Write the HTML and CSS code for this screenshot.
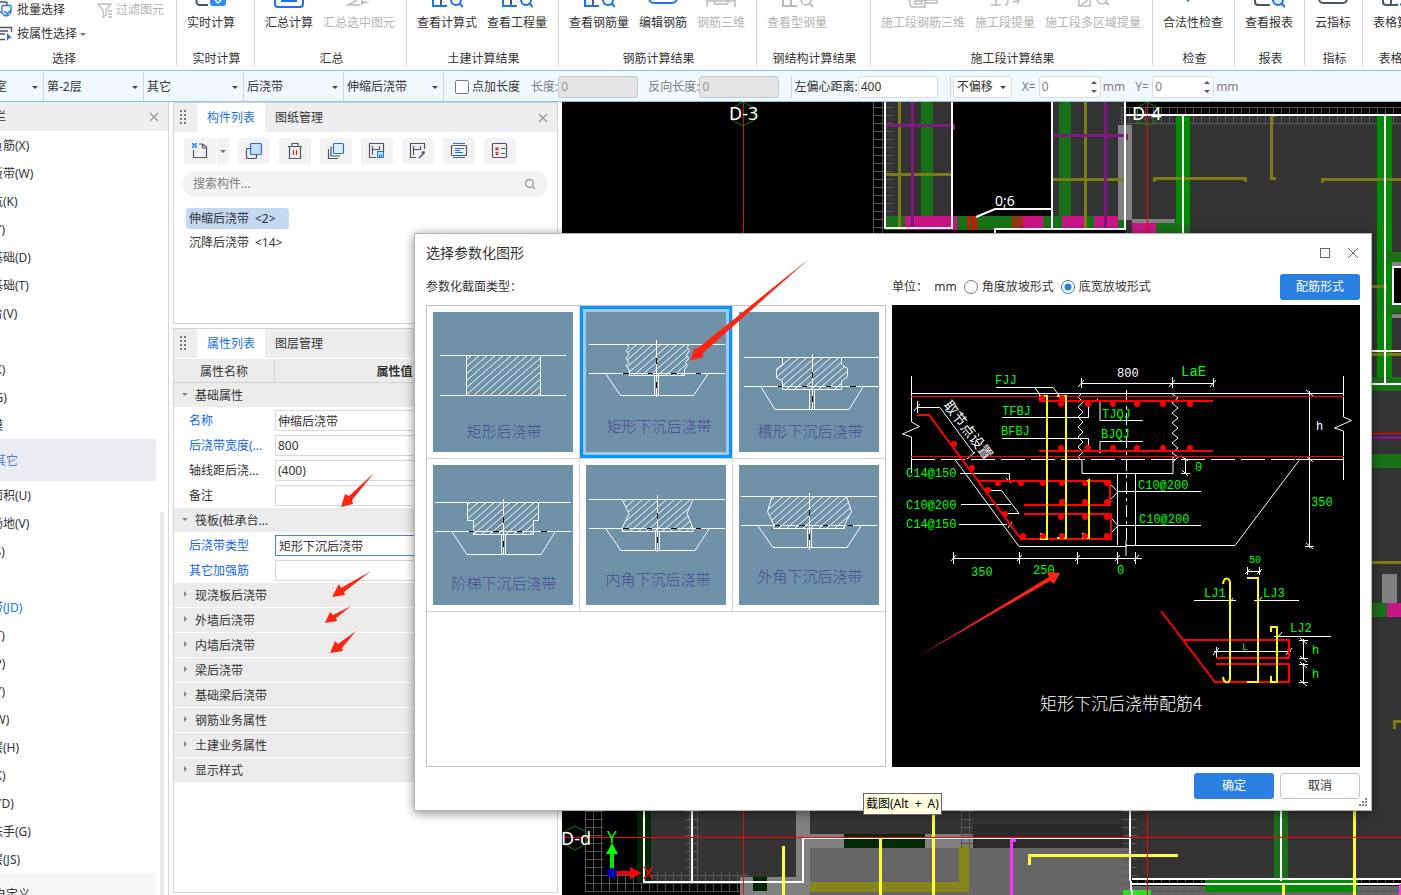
FILE: index.html
```html
<!DOCTYPE html>
<html lang="zh-CN">
<head>
<meta charset="utf-8">
<title>选择参数化图形</title>
<link rel="stylesheet" href="styles.css">
</head>
<body>
<div class="app">
  <header class="ribbon">
    <section class="group group-select">
      <div class="select-tools">
        <button class="tool"><svg width="16" height="18" viewBox="0 0 16 18"><path d="M0 4.500V2a1 1 0 0 1 1-1h7a1 1 0 0 1 1 1v2M0 11h3" fill="none" stroke="#4b5468" stroke-width="1.500"/><path d="M4 13V5.500a1 1 0 0 1 1-1h7a1 1 0 0 1 1 1V10a6 6 0 0 1-4.500 5A6 6 0 0 1 4 12M6 10l3 3 4-4" fill="none" stroke="#1a73e8" stroke-width="1.300"/></svg>批量选择</button>
        <button class="tool off"><svg width="16" height="16" viewBox="0 0 16 16"><path d="M1 2h13l-5 6v5l-3 2V8zM11 9h4M11 12h4M11 15h4" fill="none" stroke="#bbb" stroke-width="1.300"/></svg>过滤图元</button>
        <button class="tool wide"><svg width="16" height="16" viewBox="0 0 16 16"><path d="M0 1.500h13.500V6M2 5h8M2 8h5M0 13.500h7" fill="none" stroke="#4b5468" stroke-width="1.300"/><path d="M9 7l5 5-3 .3L9 15z" fill="#1a73e8"/></svg>按属性选择<i class="caret"></i></button>
      </div>
      <h2>选择</h2>
    </section>
    <section class="group group-live">
      <div class="tools"><button class="big"><svg width="32" height="12" viewBox="0 0 32 12"><path d="M1.500 0v2a3 3 0 0 0 3 3H13" fill="none" stroke="#4b5468" stroke-width="2"/><path d="M15 0h16v3a3 3 0 0 1-3 3H18a3 3 0 0 1-3-3z" fill="#2e8bff"/><path d="M20 0l3 3 4-4" stroke="#fff" fill="none" stroke-width="1.500"/></svg>实时计算</button></div>
      <h2>实时计算</h2>
    </section>
    <section class="group group-mid">
      <div class="tools"><button class="big"><svg width="32" height="12" viewBox="0 0 32 12"><path d="M2 0v4a3 3 0 0 0 3 3h22a3 3 0 0 0 3-3V0" fill="none" stroke="#1a73e8" stroke-width="2"/><path d="M8 1h16" stroke="#1a73e8" stroke-width="2"/></svg>汇总计算</button>
      <button class="big off"><svg width="32" height="12" viewBox="0 0 32 12"><path d="M14 0L5 5h12" fill="none" stroke="#bbb" stroke-width="1.500"/><path d="M18 0v6l3-3h6z" fill="#bbb"/></svg>汇总选中图元</button></div>
      <h2>汇总</h2>
    </section>
    <section class="group group-mid">
      <div class="tools"><button class="big"><svg width="32" height="12" viewBox="0 0 32 12"><path d="M2 0v6h14M10 0v5" fill="none" stroke="#1a73e8" stroke-width="2"/><path d="M10 0v4" stroke="#4b5468" stroke-width="2"/><circle cx="25" cy="0" r="5" fill="none" stroke="#1a73e8" stroke-width="2"/><path d="M28 3l4 4" stroke="#1a73e8" stroke-width="2"/></svg>查看计算式</button>
      <button class="big"><svg width="32" height="12" viewBox="0 0 32 12"><path d="M2 0v6h14M10 0v5" fill="none" stroke="#1a73e8" stroke-width="2"/><path d="M10 0v4" stroke="#4b5468" stroke-width="2"/><circle cx="25" cy="0" r="5" fill="none" stroke="#1a73e8" stroke-width="2"/><path d="M28 3l4 4" stroke="#1a73e8" stroke-width="2"/></svg>查看工程量</button></div>
      <h2>土建计算结果</h2>
    </section>
    <section class="group group-rebar">
      <div class="tools"><button class="big"><svg width="32" height="12" viewBox="0 0 32 12"><path d="M2 0v6h14M10 0v5" fill="none" stroke="#1a73e8" stroke-width="2"/><path d="M10 0v4" stroke="#4b5468" stroke-width="2"/><circle cx="25" cy="0" r="5" fill="none" stroke="#1a73e8" stroke-width="2"/><path d="M28 3l4 4" stroke="#1a73e8" stroke-width="2"/></svg>查看钢筋量</button>
      <button class="big"><svg width="32" height="12" viewBox="0 0 32 12"><path d="M2 -2a5 5 0 0 0 5 5h18a5 5 0 0 0 5-5" fill="none" stroke="#1a73e8" stroke-width="2"/></svg>编辑钢筋</button>
      <button class="big off"><svg width="32" height="12" viewBox="0 0 32 12"><path d="M2 0v7M9 0v4M23 0v4M30 0v7M2 1h28M9 4h14" fill="none" stroke="#bbb" stroke-width="1.500"/></svg>钢筋三维</button></div>
      <h2>钢筋计算结果</h2>
    </section>
    <section class="group group-steel">
      <div class="tools"><button class="big off"><svg width="32" height="12" viewBox="0 0 32 12"><path d="M2 0v6h14M10 0v5" fill="none" stroke="#bbb" stroke-width="2"/><circle cx="25" cy="0" r="5" fill="none" stroke="#bbb" stroke-width="1.500"/><path d="M28 3l4 4" stroke="#bbb" stroke-width="2"/></svg>查看型钢量</button></div>
      <h2>钢结构计算结果</h2>
    </section>
    <section class="group group-stage">
      <div class="tools"><button class="big off"><svg width="32" height="12" viewBox="0 0 32 12"><path d="M3 0v4a3 3 0 0 0 3 3h12V0M8 1h7v3H8zM14 0h16v3H18" fill="none" stroke="#bbb" stroke-width="1.500"/></svg>施工段钢筋三维</button>
      <button class="big off"><svg width="32" height="12" viewBox="0 0 32 12"><path d="M2 5h10M7 0v5M19 0c0 4-1 5-3 5M24 2l7-2M29 0v4" fill="none" stroke="#bbb" stroke-width="1.500"/></svg>施工段提量</button>
      <button class="big off"><svg width="32" height="12" viewBox="0 0 32 12"><path d="M2 0v6h11V0M4 5l7-5" fill="none" stroke="#bbb" stroke-width="1.500"/><circle cx="25" cy="-1" r="5" fill="none" stroke="#bbb" stroke-width="1.500"/><path d="M28 2l4 3" stroke="#bbb" stroke-width="2"/></svg>施工段多区域提量</button></div>
      <h2>施工段计算结果</h2>
    </section>
    <section class="group group-check">
      <div class="tools"><button class="big"><svg width="32" height="12" viewBox="0 0 32 12"><path d="M8 -3l3 4 3-4" fill="none" stroke="#1a73e8" stroke-width="1.500"/></svg>合法性检查</button></div>
      <h2>检查</h2>
    </section>
    <section class="group group-report">
      <div class="tools"><button class="big"><svg width="32" height="12" viewBox="0 0 32 12"><path d="M2 0v2a3 3 0 0 0 3 3h12" fill="none" stroke="#4b5468" stroke-width="2"/><circle cx="25" cy="0" r="5" fill="#d9eaff" stroke="#1a73e8" stroke-width="2"/><path d="M28 3l4 4" stroke="#1a73e8" stroke-width="2"/></svg>查看报表</button></div>
      <h2>报表</h2>
    </section>
    <section class="group group-index">
      <div class="tools"><button class="big"><svg width="32" height="12" viewBox="0 0 32 12"><path d="M2 -1a4 4 0 0 0 4 4h20a4 4 0 0 0 4-4" fill="none" stroke="#4b5468" stroke-width="2"/></svg>云指标</button></div>
      <h2>指标</h2>
    </section>
    <section class="group group-sheet">
      <div class="tools"><button class="big"><svg width="32" height="12" viewBox="0 0 32 12"><path d="M2 0v2a3 3 0 0 0 3 3h12M10 0v5" fill="none" stroke="#4b5468" stroke-width="2"/><path d="M19 5l9-7" stroke="#1a73e8" stroke-width="2"/></svg>表格算量</button></div>
      <h2>表格算量</h2>
    </section>
  </header>

  <form class="options">
    <span class="pick pick-first"><select aria-label="分区"><option>地下室</option></select></span>
    <span class="pick"><select aria-label="楼层"><option>第-2层</option></select></span>
    <span class="pick"><select aria-label="类别"><option>其它</option></select></span>
    <span class="pick"><select aria-label="构件类型"><option>后浇带</option></select></span>
    <span class="pick"><select aria-label="构件"><option>伸缩后浇带</option></select></span>
    <label class="check"><input type="checkbox">点加长度</label>
    <label class="field dim">长度:<input type="text" value="0" disabled></label>
    <label class="field dim">反向长度:<input type="text" value="0" disabled></label>
    <label class="field ruled">左偏心距离:<input type="text" value="400"></label>
    <span class="ruled"><span class="mode"><select aria-label="偏移方式"><option>不偏移</option></select></span></span>
    <label class="field spin dim"><b>X=</b><span><input type="text" value="0"></span>mm</label>
    <label class="field spin dim"><b>Y=</b><span><input type="text" value="0"></span>mm</label>
  </form>

  <main class="work">
    <aside class="nav">
      <div class="bar"><span class="nav-title">导航栏</span><button class="close" aria-label="关闭"><svg width="10" height="10" viewBox="0 0 10 10"><path d="M1 1l8 8M9 1L1 9" stroke="#999" stroke-width="1.200"/></svg></button></div>
      <div class="nav-body">
        <nav class="list">
          <a href="#">筏板负筋(X)</a><a href="#">基础板带(W)</a><a href="#">集水坑(K)</a><a href="#">柱墩(Y)</a><a href="#">独立基础(D)</a><a href="#">条形基础(T)</a><a href="#">桩承台(V)</a><a href="#">桩(U)</a><a href="#">垫层(X)</a><a href="#">地沟(G)</a><a href="#">砖胎膜</a>
          <a href="#" class="head on">其它</a>
          <a href="#">建筑面积(U)</a><a href="#">平整场地(V)</a><a href="#">散水(S)</a><a href="#">台阶</a><a href="#" class="current">后浇带(JD)</a><a href="#">挑檐(T)</a><a href="#">雨篷(P)</a><a href="#">阳台(Y)</a><a href="#">屋面(W)</a><a href="#">保温层(H)</a><a href="#">栏板(K)</a><a href="#">压顶(YD)</a><a href="#">栏杆扶手(G)</a><a href="#">防水层(JS)</a>
          <a href="#" class="head">自定义</a>
        </nav>
        <div class="track"></div>
      </div>
    </aside>

    <div class="panels">
      <section class="panel components">
        <div class="bar"><i class="grip"></i><button class="tab on">构件列表</button><button class="tab">图纸管理</button><button class="close" aria-label="关闭"><svg width="10" height="10" viewBox="0 0 10 10"><path d="M1 1l8 8M9 1L1 9" stroke="#999" stroke-width="1.200"/></svg></button></div>
        <div class="icons">
          <span class="split"><button aria-label="新建"><svg width="18" height="18" viewBox="0 0 18 18"><path d="M2.500 8v7.500h13V5l-4-3H8M11.500 2v4h4" fill="none" stroke="#4b5468" stroke-width="1.200"/><path d="M1 1h5v5H1z" fill="#8dbcf5"/><path d="M1 1l5 5M6 1L1 6" stroke="#1a73e8"/></svg></button><button class="more" aria-label="更多新建"><i class="caret"></i></button></span>
          <button aria-label="复制"><svg width="18" height="18" viewBox="0 0 18 18"><path d="M5 6.500H2.500a1 1 0 0 0-1 1v8a1 1 0 0 0 1 1h8a1 1 0 0 0 1-1V13" fill="none" stroke="#4b5468" stroke-width="1.200"/><rect x="5.500" y="1.500" width="11" height="11" rx="1" fill="#c9dff9" stroke="#1a73e8" stroke-width="1.200"/></svg></button>
          <button aria-label="删除"><svg width="18" height="18" viewBox="0 0 18 18"><path d="M2 4.500h14M6 4V1.500h6V4M3.500 5v11.500h11V5" fill="none" stroke="#4b5468" stroke-width="1.200"/><path d="M7.500 8v5M10.500 8v5" stroke="#e02020" stroke-width="1.200"/></svg></button>
          <button aria-label="层间复制"><svg width="18" height="18" viewBox="0 0 18 18"><path d="M1.500 7v9.500H11M4 4.500V14h9" fill="none" stroke="#4b5468" stroke-width="1.200"/><rect x="6.500" y="1.500" width="10" height="10" rx="1" fill="#e2efff" stroke="#1a73e8" stroke-width="1.200"/></svg></button>
          <button aria-label="存档"><svg width="18" height="18" viewBox="0 0 18 18"><path d="M8 15.500H1.500v-14h14V9M4.500 4v9M4.500 7.500h7M11.500 4v4" fill="none" stroke="#4b5468" stroke-width="1.200"/><rect x="9.500" y="9.500" width="6" height="6" fill="#c9dff9" stroke="#1a73e8"/><path d="M11.500 15v-2h2v2" stroke="#1a73e8" fill="none"/></svg></button>
          <button aria-label="提取"><svg width="18" height="18" viewBox="0 0 18 18"><path d="M7 15.500H1.500v-14h14V7M4.500 4v9M4.500 7.500h7M11.500 4v4" fill="none" stroke="#4b5468" stroke-width="1.200"/><path d="M10 16l4-4" stroke="#4b5468" stroke-width="1.500"/><path d="M12 10l3-1 1 1-1 3z" fill="#4b5468"/></svg></button>
          <button aria-label="排序"><svg width="18" height="18" viewBox="0 0 18 18"><path d="M3 1.500h12M3 15.500h12" stroke="#1a73e8" stroke-width="1.200"/><rect x="1.500" y="3.500" width="15" height="10" rx="1" fill="none" stroke="#4b5468" stroke-width="1.200"/><path d="M5 6.500h9M5 8.500h5M5 10.500h8" stroke="#1a73e8"/></svg></button>
          <button aria-label="清理"><svg width="18" height="18" viewBox="0 0 18 18"><rect x="1.500" y="1.500" width="14" height="14" rx="1" fill="none" stroke="#4b5468" stroke-width="1.200"/><path d="M4.500 5.500l3 2.500M7.500 5.500l-3 2.500M4.500 10l3 2.500M7.500 10l-3 2.500" stroke="#e02020" stroke-width="1.200"/><path d="M10 6.500h4M10 11.500h4" stroke="#4b5468" stroke-width="1.200"/></svg></button>
        </div>
        <label class="search"><input type="text" placeholder="搜索构件..." aria-label="搜索构件"><svg width="12" height="12" viewBox="0 0 12 12"><circle cx="5.500" cy="5.500" r="4" fill="none" stroke="#999" stroke-width="1.300"/><path d="M8 8l3 3" stroke="#999" stroke-width="1.300"/></svg></label>
        <ul class="items"><li class="on">伸缩后浇带&ensp;&lt;2&gt;</li><li>沉降后浇带&ensp;&lt;14&gt;</li></ul>
      </section>
      <section class="panel props">
        <div class="bar"><i class="grip"></i><button class="tab on">属性列表</button><button class="tab">图层管理</button></div>
        <table>
          <colgroup><col class="c1"><col class="c2"><col></colgroup>
          <thead><tr><th>属性名称</th><th>属性值</th><th></th></tr></thead>
          <tbody>
            <tr class="sec open"><td colspan="3">基础属性</td></tr>
            <tr class="key"><td><label for="p1">名称</label></td><td colspan="2"><input id="p1" value="伸缩后浇带"></td></tr>
            <tr class="key"><td><label for="p2">后浇带宽度(...</label></td><td colspan="2"><input id="p2" value="800"></td></tr>
            <tr><td><label for="p3">轴线距后浇...</label></td><td colspan="2"><input id="p3" value="(400)"></td></tr>
            <tr><td><label for="p4">备注</label></td><td colspan="2"><input id="p4"></td></tr>
            <tr class="sec open"><td colspan="3">筏板(桩承台...</td></tr>
            <tr class="key"><td><label for="p5">后浇带类型</label></td><td colspan="2"><input id="p5" class="active" value="矩形下沉后浇带"></td></tr>
            <tr class="key"><td><label for="p6">其它加强筋</label></td><td colspan="2"><input id="p6"></td></tr>
            <tr class="sec"><td colspan="3">现浇板后浇带</td></tr>
            <tr class="sec"><td colspan="3">外墙后浇带</td></tr>
            <tr class="sec"><td colspan="3">内墙后浇带</td></tr>
            <tr class="sec"><td colspan="3">梁后浇带</td></tr>
            <tr class="sec"><td colspan="3">基础梁后浇带</td></tr>
            <tr class="sec"><td colspan="3">钢筋业务属性</td></tr>
            <tr class="sec"><td colspan="3">土建业务属性</td></tr>
            <tr class="sec"><td colspan="3">显示样式</td></tr>
          </tbody>
        </table>
      </section>
    </div>

    <div class="canvas">
      <svg viewBox="562 102 839 793" preserveAspectRatio="xMinYMin slice" shape-rendering="crispEdges">
        <defs>
          <pattern id="mesh" x="585" y="107" width="8" height="8" patternUnits="userSpaceOnUse"><path d="M0 .5h8M.5 0v8" stroke="#555" fill="none"/></pattern>
          <pattern id="rungs" x="873" y="107" width="20" height="8" patternUnits="userSpaceOnUse"><path d="M0 .5h20" stroke="#555"/></pattern>
        </defs>
        <rect x="562" y="102" width="839" height="793" fill="#000"/>
        <g fill="#333"><path d="M885 102h67v126h-67zM1052 102h73v126h-73zM1125 115h276v765h-276zM651 811h145v71H651zM810 811h150v24H810zM960 811h172v70H960z"/></g>
        <rect x="873" y="102" width="20" height="131" fill="url(#rungs)"/><path d="M873.500 102v131M882.500 102v131" stroke="#555"/>
        <rect x="1121" y="107" width="280" height="18" fill="url(#mesh)"/>
        <path fill="#008b00" d="M1176 116h14v117h-14zM1377 116h15v261h-15z"/>
        <path fill="#187018" d="M921 102h12v126h-12zM1059 102h12v114h-12zM885 216h240v14H885zM1156 223h34v10h-34zM1387 252h14v10h-14zM1387 305h14v8h-14zM1372 377h29v14h-29zM1372 454h29v14h-29zM1372 603h15v14h-15zM1274 811h14v70h-14z"/>
        <path fill="#c71585" d="M905 216h52v14h-52zM1022 216h21v14h-21zM1062 216h25v14h-25zM1094 216h24v14h-24zM1132 223h24v10h-24zM1387 603h14v14h-14z"/>
        <path fill="#808080" d="M1118 125h14v95h-14zM1132 219h43v4h-43zM1392 262h9v4h-9zM1392 314h9v4h-9zM1382 574h15v29h-15z"/>
        <path fill="#000" d="M1393 267h8v37h-8z"/>
        <path d="M899 102v126M885 174h68M1085 102v126M1052 179h72M1154 182v-4h91v4M1276 115h-5v63h5M1322 183v-4h79M1372 286h13v5M1372 354h29M1372 562h29M1394 729v-8h7" stroke="#7c7c14" stroke-width="3" fill="none"/>
        <path d="M912 102v126M885 129v-4h68v5M1105 102v126M1052 139v-4h74v5M1372 437h29" stroke="#7d187d" stroke-width="3" fill="none"/>
        <path d="M969 216v14M973 216v14M976 216v14M1014 216v14M1018 216v14M1022 216v14" stroke="#f00" stroke-width="2"/>
        <path d="M885 102v126M952 102v127M884 228h69M1052 102v127M1125 102v127M995 233v-4h131M1125 115h276M1183 116v117M1385 116v268M1372 351h29M1372 384h29M1401 267h-8v37h8" stroke="#fff" stroke-width="2" fill="none"/>
        <path d="M976 217l19-8h57" stroke="#fff" stroke-width="2" fill="none" shape-rendering="auto"/>
        <rect x="585" y="811" width="18" height="81" fill="url(#mesh)"/><rect x="603" y="872" width="147" height="20" fill="url(#mesh)"/>
        <path fill="#022802" d="M637 811h14v71h-14z"/>
        <path fill="#808080" d="M796 811h14v70h-14zM796 834h180v14H796zM740 877h70v18h-70z"/>
        <path fill="#666" d="M810 848h320v47H810zM1132 886h269v9h-269z"/>
        <path fill="#333" d="M810 811h150v23H810z"/>
        <path fill="#2a2a2a" d="M973 824h150v24H973z"/>
        <path fill="#022802" d="M844 834h81v14h-81zM753 877h14v14h-14z"/>
        <path fill="#86861a" d="M810 882h149v10H810zM959 846h10v46h-10z"/>
        <path fill="#000" d="M1132 880h269v5h-269z"/>
        <rect x="1132" y="880" width="269" height="12" fill="url(#mesh)"/><rect x="961" y="811" width="12" height="37" fill="url(#mesh)"/><rect x="1123" y="811" width="14" height="80" fill="url(#mesh)"/><rect x="685" y="811" width="14" height="71" fill="url(#mesh)"/>
        <path fill="#008b00" d="M1205 879h153v13h-153z"/><path fill="#2bdc2b" d="M1123 890h28v5h-28z"/>
        <path d="M644 811v71h159v-44h327v3M692 811v71M1130 811v65l2 19M1281 811v70M1132 879h269M1132 884h269" stroke="#fff" stroke-width="2" fill="none"/>
        <path d="M783 846v49M880 839v56M933 811v84M1029 865v-10h149M1354 811v84M1283 884v11" stroke="#ff3" stroke-width="3" fill="none"/>
        <path d="M1011 895v-55h5M1400 884v11" stroke="#f3f" stroke-width="3" fill="none"/>
        <g fill="#f00" shape-rendering="auto"><rect x="743" y="102" width="1" height="793"/><rect x="1147" y="102" width="1" height="793"/><rect x="562" y="837" width="839" height="1"/><rect x="1372" y="433" width="29" height="1"/></g>
        <g fill="none" stroke="#080" shape-rendering="auto"><path d="M743 102l11 6v12l-11 6-11-6v-12zM1147 102l11 6v12l-11 6-11-6v-12zM575 826l11 6v12l-11 6-11-6v-12z"/></g>
        <g class="axis-text"><text x="729" y="120">D-3</text><text x="1132" y="120">D-4</text><text x="561" y="845">D-d</text></g>
        <text class="note" x="995" y="206">0;6</text>
        <g shape-rendering="auto"><path d="M612 870v-18" stroke="#0e0" stroke-width="4"/><path d="M606 854l6-11 6 11z" fill="#0f0"/><path d="M616 873h16" stroke="#e00" stroke-width="4"/><path d="M630 867l12 6-12 6z" fill="#f00"/><circle cx="612" cy="873" r="5" fill="#0000b8"/></g>
        <text class="axis-y" x="607" y="843">Y</text><text class="axis-x" x="643" y="879">X</text>
      </svg>
    </div>
  </main>
</div>

<section class="dialog" role="dialog" aria-label="选择参数化图形">
  <div class="title"><h1>选择参数化图形</h1>
    <button aria-label="最大化"><svg width="12" height="12" viewBox="0 0 12 12"><rect x="1.500" y="1.500" width="9" height="9" fill="none" stroke="#666"/></svg></button>
    <button aria-label="关闭"><svg width="12" height="12" viewBox="0 0 12 12"><path d="M1 1l10 10M11 1L1 11" stroke="#666"/></svg></button>
  </div>
  <div class="cols">
    <div class="left">
      <div class="row">参数化截面类型：</div>
      <div class="shapes">
        <svg class="defs" width="0" height="0"><defs><pattern id="hatch" width="8" height="7" patternUnits="userSpaceOnUse"><path d="M-1 8L9-1M-9 8L1-1M7 8l10-9" stroke="#fff" fill="none"/></pattern></defs></svg>
        <button class="shape"><svg viewBox="0 0 140 140"><path class="ln" d="M7 43.500h126M7 83.500h126"/><path class="fl" d="M33.500 43.500h74v40h-74z"/><text x="71" y="125">矩形后浇带</text></svg></button>
        <button class="shape on"><svg viewBox="0 0 140 140"><path class="ln" d="M3 32.500h136M3 61.500h136M20 62l14.500 21.500h73L122 62M68.500 63v20M72.500 63v20M70.500 28v57"/><path class="fl" d="M41 32.500l2 3-3 3 3 4-3 4 3 4-3 3 3 4v6h55.500v-6l3-4-2-3 3-4-2-4 3-4-2-3 1-3z"/><path class="bk" d="M37 61.500h6M62 61.500h5M85 61.500h6M110 61.500h5M70.500 46v6M70.500 70v6"/><text x="73" y="120">矩形下沉后浇带</text></svg></button>
        <button class="shape"><svg viewBox="0 0 140 140"><path class="ln" d="M5 45.500h135M5 74.500h135M22 75l14 22.500h74L124 75M70.500 78v20M75.500 78v20M73.500 42v56"/><path class="fl" d="M43.500 45.500v7l-6 5v8l6 4v8h59v-8l6-5v-8l-6-4v-7z"/><path class="bk" d="M39 74.500h4M63 74.500h5M87 74.500h5M111 74.500h6M73.500 60v6M73.500 84v6"/><text x="71" y="125">槽形下沉后浇带</text></svg></button>
        <button class="shape"><svg viewBox="0 0 140 140"><path class="ln" d="M2 37.500h136M2 66.500h136M19 67l15 22.500h74L122 67M68.500 70v19M72.500 70v19M70.500 34v56"/><path class="fl" d="M34.500 37.500v18h6v14h60v-14h5v-18z"/><path class="bk" d="M36 66.500h5M60 66.500h6M84 66.500h5M108 66.500h6M70.500 52v6M70.500 76v6"/><text x="71" y="124">阶梯下沉后浇带</text></svg></button>
        <button class="shape"><svg viewBox="0 0 140 140"><path class="ln" d="M3 34.500h136M3 63.500h136M20 64l15 21.500h74L123 64M69.500 67v19M73.500 67v19M71.500 30v57"/><path class="fl" d="M36 34.500l7 14-7 15v3h71v-3l-6-15 6-14z"/><path class="bk" d="M37 63.500h6M61 63.500h5M85 63.500h6M110 63.500h5M71.500 48v6M71.500 72v6"/><text x="72" y="120">内角下沉后浇带</text></svg></button>
        <button class="shape"><svg viewBox="0 0 140 140"><path class="ln" d="M2 31.500h136M2 60.500h136M19 61l15 21.500h74L122 61M68.500 64v19M72.500 64v19M70.500 28v57"/><path class="fl" d="M33 31.500l-4.500 15 6 13v4h71v-4l7-13-5-15z"/><path class="bk" d="M36 60.500h5M60 60.500h6M84 60.500h5M108 60.500h6M70.500 45v6M70.500 69v6"/><text x="71" y="117">外角下沉后浇带</text></svg></button>
      </div>
    </div>
    <div class="right">
      <div class="row"><span>单位：&nbsp; mm</span><label><input type="radio" name="slope">角度放坡形式</label><label><input type="radio" name="slope" checked>底宽放坡形式</label><button class="primary push">配筋形式</button></div>
      <div class="preview">
        <svg viewBox="892 305 468 462" preserveAspectRatio="xMidYMid meet">
          <g fill="none" stroke="#fff" stroke-width="1">
            <path d="M911.500 376v46l8 4.500-17 7.500 9 3v36M1343.500 376v41l8 3.500-17 7.500 9 3v49"/>
            <path d="M911 393.500h433M1296 459.500h48"/>
            <path d="M911 459.500h385" stroke-dasharray="24 6"/>
            <path d="M1081 383.500h133M1081.500 378v10M1172.500 377v11M1213.500 378v9M1078 387l6-7M1169 387l6-7M1210 387l6-7"/>
            <path d="M1081 394l-3 3 5 5-5 5 5 5-5 5 5 5-5 5 5 5-5 5 5 5-5 5 5 5-5 5 4 4v12.500h91V457M1172 394l6 4-6 5 6 5-6 5 6 5-6 5 6 5-6 5 6 5-6 5 6 5-6 5 6 4-5 5"/>
            <path d="M996 387.500h57l7 9M1035 387.500l6 9M1002 417.500h86.500V404M1002 438.500h86.500V450M1143 420.500h-43V402l-3-3M1143 441.500h-43V453l-3-3"/>
            <path d="M1126.500 390v156" stroke-dasharray="12 4 3 4"/>
            <path d="M917.500 401v12M914 411l6-7M918 407.500h22l34 46M967 459l8-7M955 459.500l64 87h107v-1h109l64-85"/>
            <path d="M960 473.500h49.500v7M1006 478l5 5M961 504.500h50M991 490.500h10.500l17.500 23h-12M959 524.500h48M1008 528l4-6"/>
            <path d="M1117.500 473v72M1135.500 473v72M1126 540v16"/>
            <path d="M1111 485l7 6.500-7 7.500M1118 491.500h83M1111 518l7 7.500-7 7.500M1118 525.500h83"/>
            <path d="M953 558.500h189M953.500 552v12M1019.500 552v12M1077.500 552v12M1117.500 552v12M1135.500 552v12M951 561l5-6M1017 561l5-6M1075 561l5-6M1115 561l5-6M1134 561l5-6"/>
            <path d="M1185.500 458v16M1181 456l7 5M1181 473.500h9M1182 470l6 6M1309.500 391v157M1306 390l7 6M1306 456l7 6M1305 546.500h9M1306 543l7 6"/>
            <path d="M1247 571.500h14M1247.500 567v8M1259.500 567v8M1245 574l5-5M1257 574l5-5"/>
            <path d="M1194 600.500h42M1254 600.500h45M1229 604l4-6M1257 603l5-6M1274 636.500h57M1277 638l5-6"/>
            <path d="M1214 651.500h77M1216.500 647v10M1289.500 647v10M1213 655l6-7M1286 655l6-7M1303.500 639v20M1303.500 663v21M1299 640.500h9M1299 658.500h9M1299 664.500h9M1299 682.500h9M1300 638l7 6M1300 656l7 6M1300 662l7 6M1300 680l7 6"/>
          </g>
          <g fill="none" stroke="#f00">
            <path d="M911 396.500h433M911 456.500h433"/>
            <path stroke-width="2" d="M917 415h12l92 124h90v-25h-87M978 481h132v24h-86M1039 401h174M1039 451h174M1161 611l54 71h74v-18h-73M1183 640h106v18h-73"/>
          </g>
          <g fill="none" stroke="#ff0" stroke-width="2"><path d="M1040 400v-4h7v143h-6v-6M1057 396h9v142h-9M1083 484l6-4v58h-6v-5M1223 584c1-8 7-6 7-1v95c0 6-6 6-7-1M1247 578h11v104h-11M1271 632v-5h6v55h-6v-6"/></g>
          <path class="dots" d="M1042 398h0M1062 398h0M1061 404h0M1088 404h0M1113 404h0M1137 404h0M1163 404h0M1190 404h0M1061 448h0M1088 448h0M1113 448h0M1137 448h0M1163 448h0M1190 448h0M954 444h0M972 468h0M988 490h0M1005 514h0M1023 536h0M998 483h0M1021 483h0M1043 483h0M1062 483h0M1085 483h0M1107 483h0M1062 502h0M1085 502h0M1107 502h0M1061 517h0M1085 517h0M1107 517h0M1043 536h0M1062 536h0M1085 536h0M1107 536h0"/>
          <g class="cad">
            <text x="995" y="384">FJJ</text><text x="1002" y="415">TFBJ</text><text x="1001" y="435">BFBJ</text><text x="1102" y="418">TJQJ</text><text x="1101" y="438">BJQJ</text>
            <text x="906" y="477">C14@150</text><text x="906" y="509">C10@200</text><text x="906" y="528">C14@150</text><text x="1138" y="489">C10@200</text><text x="1139" y="523">C10@200</text>
            <text x="971" y="576">350</text><text x="1033" y="574">250</text><text x="1117" y="574">0</text><text x="1195" y="471">0</text><text x="1311" y="506">350</text>
            <text x="1204" y="597">LJ1</text><text x="1263" y="597">LJ3</text><text x="1290" y="632">LJ2</text><text x="1312" y="654">h</text><text x="1312" y="678">h</text>
            <text class="lg" x="1181" y="376">LaE</text><text class="sm" x="1249" y="563">50</text><text class="sm" x="1242" y="650">L</text>
            <text class="wh" x="1117" y="377">800</text><text class="wh" x="1316" y="430">h</text>
          </g>
          <text class="slant" transform="translate(951 408) rotate(52)" x="-7" y="5">取节点设置</text>
          <text class="caption" x="1040" y="710">矩形下沉后浇带配筋4</text>
        </svg>
      </div>
    </div>
  </div>
  <footer><button class="primary">确定</button><button class="plain">取消</button></footer>
  <svg class="size-grip" width="9" height="9" viewBox="0 0 9 9"><path d="M6 0h2v2H6zM3 3h2v2H3zM6 3h2v2H6zM0 6h2v2H0zM3 6h2v2H3zM6 6h2v2H6z" fill="#888"/></svg>
</section>

<div class="tip" role="tooltip">截图(Alt&ensp;+&ensp;A)</div>

<svg class="marks" aria-hidden="true">
  <path d="M810 258L698 348l-4 1-4 12 13-4 0-4z"/>
  <path d="M917 657l133-76 4 3 6-11-13-1 2 5z"/>
  <path d="M374 473l-25 23-4-2-4 13 12-3-1-4z"/>
  <path d="M371 571l-30 17-2-4-7 13 13-2-1-3z"/>
  <path d="M351 606l-18 9-3-3-5 11 12-2-1-3z"/>
  <path d="M356 631l-18 13-3-3-5 12 13-2-1-3z"/>
</svg>
</body>
</html>
```

FILE: styles.css
```css
* { box-sizing: border-box; }
html, body { height: 100%; margin: 0; }
body {
  position: relative;
  overflow: hidden;
  background: #fff;
  color: #333;
  font: 12px/16px "Noto Sans", "Noto Sans CJK SC", sans-serif;
}
button, input, select { font: inherit; color: inherit; margin: 0; }
button { padding: 0; border: 0; background: none; white-space: nowrap; }
h1, h2 { margin: 0; font-weight: 400; }
.app { display: flex; flex-direction: column; height: 100%; }
.caret { display: inline-block; border: 3px solid transparent; border-top-color: #777; border-bottom: 0; }

/* ribbon */
.ribbon { display: flex; flex: none; height: 70px; overflow: hidden; }
.group { position: relative; flex: none; display: flex; flex-direction: column; padding: 0 10px 3px; }
.group::after { content: ""; position: absolute; right: 0; top: 0; bottom: 4px; border-right: 1px solid #d4d4d4; }
.group h2 { margin: auto -1px 0 0; text-align: center; font-size: 12px; }
.group-select { width: 227px; margin-left: -50px; }
.group-live { width: 78px; }
.group-mid { width: 152px; }
.group-rebar { width: 198px; }
.group-steel { width: 114px; }
.group-stage { width: 282px; }
.group-check { width: 82px; }
.group-report { width: 70px; }
.group-index { width: 58px; }
.group-sheet { width: 78px; }
.tools { display: flex; gap: 10px; }
.big { display: flex; flex-direction: column; align-items: center; gap: 3px; }
.off { color: #b4b4b4; }
.select-tools { display: grid; grid-template-columns: 99px auto; row-gap: 8px; padding: 2px 0 0 38px; }
.tool { display: flex; align-items: center; gap: 3px; height: 16px; }
.wide { grid-column: 1 / 3; }

/* option bar */
.options {
  display: flex; flex: none; align-items: center; height: 32px; padding-top: 1px; overflow: hidden;
  background: #f0f9fe; border-top: 1px solid #8fc0f5; border-bottom: 1px solid #8fc0f5;
}
.options select { appearance: none; border: 0; background: none; width: 100%; height: 22px; padding: 0 0 0 3px; outline: 0; }
.pick, .mode { position: relative; flex: none; }
.pick { width: 100px; height: 30px; padding-top: 4px; border-right: 1px solid #d0d7dc; }
.pick-first { width: 76px; margin-left: -32px; }
.pick::after, .mode::after {
  content: ""; position: absolute; right: 5px; top: 14px;
  border: 3px solid transparent; border-top-color: #444; border-bottom: 0;
}
.mode { display: block; width: 59px; height: 22px; background: #fff; border: 1px solid #d5dbe0; border-radius: 3px; }
.mode select { height: 20px; }
.mode::after { top: 9px; }
.check { display: flex; align-items: center; gap: 3px; margin: 0 11px; }
.check input { appearance: none; width: 14px; height: 14px; border: 1px solid #777; border-radius: 2px; background: #fff; }
.field { display: flex; align-items: center; white-space: nowrap; }
.field input { width: 80px; height: 22px; padding: 0 2px; border: 1px solid #d5dbe0; border-radius: 3px; background: #fff; }
.field input:disabled { background: #e4e4e4; border-color: #c0c8d2; color: #999; }
.field b { min-width: 17px; font-weight: 400; }
.dim { color: #808080; margin-right: 10px; }
.ruled { margin-left: 2px; padding-left: 2px; border-left: 1px solid #d0d7dc; margin-right: 10px; }
.spin span { position: relative; margin-right: 2px; }
.spin input { width: 62px; }
.spin span::before, .spin span::after { content: ""; position: absolute; right: 4px; border: 3px solid transparent; }
.spin span::before { top: 5px; border-top: 0; border-bottom-color: #555; }
.spin span::after { bottom: 5px; border-bottom: 0; border-top-color: #555; }

/* work area */
.work { display: flex; flex: 1; min-height: 0; }
.bar { display: flex; flex: none; height: 29px; background: #eeeef0; }
.close { display: flex; align-items: center; margin-left: auto; padding: 0 9px; }
.nav { display: flex; flex-direction: column; flex: none; width: 169px; overflow: hidden; border-right: 1px solid #d4d4d4; }
.nav-title { margin-left: -30px; line-height: 30px; }
.nav-body { display: flex; flex: 1; min-height: 0; gap: 4px; }
.list { width: 156px; }
.list a { display: block; height: 28px; text-indent: -33px; line-height: 29px; color: inherit; text-decoration: none; white-space: nowrap; }
.list .head { height: 42px; line-height: 43px; text-indent: -6px; background: #f5f6f8; }
.list .on { background: #ebecf1; color: #4a7fd8; }
.list .current { color: #1a73e8; }
.track { width: 4px; margin-top: 381px; background: #e8e8e8; }
.panels { display: flex; flex-direction: column; flex: none; width: 385px; margin: 0 4px; gap: 4px; padding-bottom: 2px; }
.panel { border: 1px solid #d4d4d4; overflow: hidden; }
.components { flex: none; height: 222px; }
.props { flex: 1; min-height: 0; }
.grip { width: 7px; height: 14px; margin: 7px 10px 0 6px; background: conic-gradient(#777 25%, transparent 0) 2px 0 / 4px 4px; }
.tab { width: 68px; }
.tab.on { background: #fff; color: #1a73e8; }
.icons { display: flex; gap: 9px; padding: 6px 10px; }
.icons button { display: flex; align-items: center; justify-content: center; width: 32px; height: 26px; border-radius: 3px; background: #f3f3f3; }
.split { display: flex; gap: 1px; }
.icons .more { width: 12px; }
.search { display: flex; align-items: center; height: 26px; margin: 1px 9px 11px 8px; padding: 0 12px 0 11px; border-radius: 13px; background: #f3f3f3; }
.search input { flex: 1; min-width: 0; border: 0; padding: 0; background: none; outline: 0; }
.search input::placeholder { color: #808080; opacity: 1; }
.items { margin: 0 0 0 12px; padding: 0; list-style: none; }
.items li { width: 103px; height: 21px; margin-bottom: 3px; padding-left: 3px; line-height: 22px; border-radius: 3px; }
.items .on { background: #c3daf3; }
table { width: 100%; margin-top: 1px; border-collapse: separate; border-spacing: 0; table-layout: fixed; }
.c1 { width: 101px; }
.c2 { width: 240px; }
th, td { height: 25px; padding: 0; text-align: left; white-space: nowrap; }
th { height: 24px; padding-top: 2px; background: #ececec; border-right: 1px solid #d4d4d4; border-bottom: 1px solid #d4d4d4; text-align: center; }
th:first-child { font-weight: 400; }
td:first-child { padding-left: 15px; }
.key label { color: #1464f4; }
.sec td { position: relative; padding-top: 2px; background: #ececec; border-bottom: 1px solid #fff; }
.sec td:first-child { padding-left: 21px; }
.sec td::before { content: ""; position: absolute; left: 10px; top: 8px; border: 3px solid transparent; border-left-color: #888; border-right: 0; }
.sec.open td::before { left: 8px; top: 10px; border: 3px solid transparent; border-top-color: #888; border-bottom: 0; }
td input { display: block; width: 100%; height: 21px; padding: 0 2px; border: 1px solid #d8d8d8; background: #fff; }
td .active { padding-left: 3px; border-color: #4a7fd8; }
.canvas { flex: 1; min-width: 0; overflow: hidden; background: #000; }
.canvas svg { display: block; width: 100%; height: 100%; }
.axis-text, .note { fill: #fff; font-size: 18px; }
.note { font-size: 14px; }
.axis-y, .axis-x { font-size: 17px; fill: #0f0; }
.axis-x { fill: #f00; }

/* dialog window */
.dialog {
  position: absolute; left: 414px; top: 233px; width: 958px; display: flex; flex-direction: column;
  padding: 0 11px 11px; background: #fff; border: 1px solid #b4b4b4; box-shadow: 0 2px 10px rgba(0, 0, 0, .45);
}
.title { display: flex; align-items: center; gap: 16px; height: 38px; padding-right: 1px; }
.title h1 { flex: 1; font-size: 14px; line-height: 20px; }
.title button, .title svg { display: block; }
.cols { display: grid; grid-template-columns: 460fr 468fr; gap: 6px; }
.row { display: flex; align-items: center; height: 29px; margin-bottom: 4px; }
.right .row { gap: 7px; }
.right .row label { display: flex; align-items: center; gap: 4px; }
.row input { appearance: none; width: 14px; height: 14px; border: 1px solid #777; border-radius: 50%; background: #fff; }
.row input:checked { border-color: #2b7fe3; background: radial-gradient(circle, #2b7fe3 3px, #fff 4px); }
.push { margin-left: auto; }
.primary, .plain { width: 80px; height: 26px; border-radius: 3px; }
.primary { background: #2b7fe3; color: #fff; }
.plain { border: 1px solid #c4c4c4; background: #fff; }
.shapes { display: grid; grid-template-columns: 153fr 153fr 152fr; align-content: start; height: 462px; border: 1px solid #c4c4c4; position: relative; }
.defs { position: absolute; }
.shape { padding: 6px; border-right: 1px solid #d4d4d4; border-bottom: 1px solid #d4d4d4; }
.shape:nth-of-type(3n) { border-right: 0; }
.shape svg { display: block; width: 100%; background: #6f92a8; }
.shape.on { box-shadow: inset 0 0 0 3px #0a96ff, inset 0 0 0 6px #a0c8ff; }
.shape text { fill: #4b4b96; font: 15px "Noto Sans CJK SC", sans-serif; font-weight: 300; text-anchor: middle; }
.ln, .fl { fill: none; stroke: #fff; }
.fl { fill: url(#hatch); }
.bk { stroke: #000; }
.preview { height: 462px; background: #000; }
.preview svg { display: block; width: 100%; height: 100%; }
.dots { fill: none; stroke: #f00; stroke-width: 6px; stroke-linecap: round; }
.cad { fill: #0f0; font: 12px "Liberation Mono", monospace; }
.lg { font-size: 14px; }
.sm { font-size: 10px; }
.wh { fill: #fff; }
.slant, .caption { fill: #fff; font: 14px "Noto Sans CJK SC", sans-serif; }
.caption { font-size: 17px; font-weight: 300; }
.dialog footer { display: flex; justify-content: flex-end; gap: 6px; padding-top: 6px; }
.size-grip { position: absolute; right: 3px; bottom: 3px; }

.tip {
  position: absolute; left: 863px; top: 793px; padding: 1px 2px; color: #000;
  background: #ffffe1; border: 1px solid #666; line-height: 18px; white-space: nowrap;
}
.marks { position: absolute; left: 0; top: 0; width: 100%; height: 100%; pointer-events: none; fill: #ff2311; }
```
